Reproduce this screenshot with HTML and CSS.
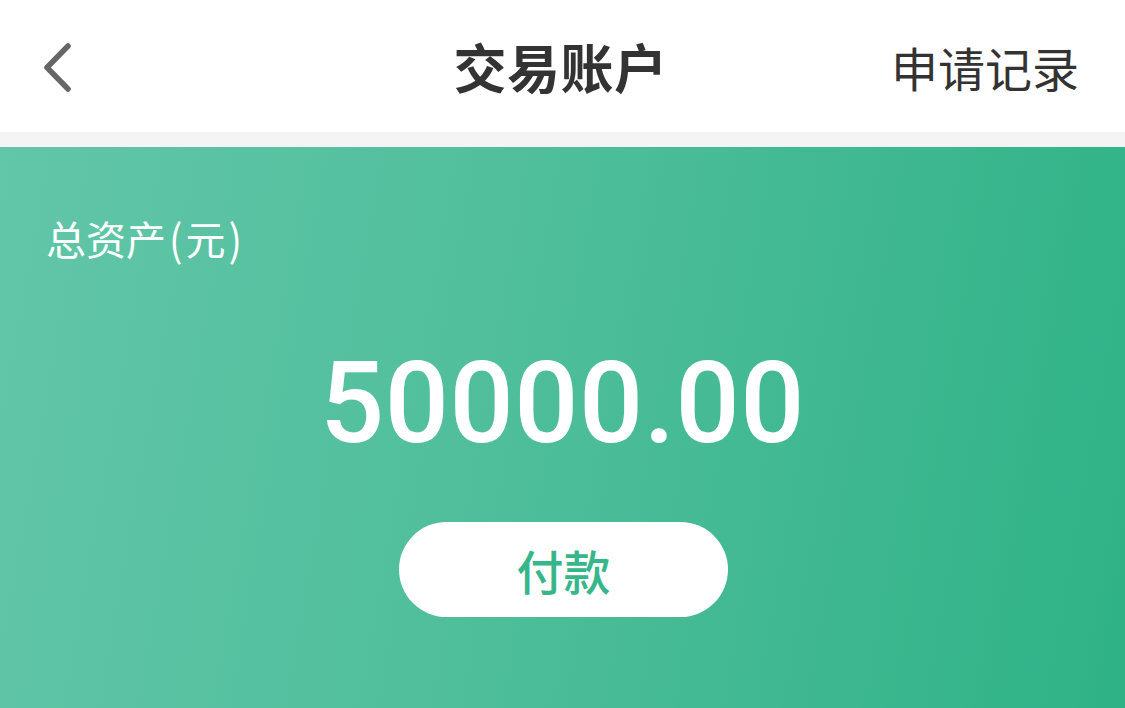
FILE: index.html
```html
<!DOCTYPE html>
<html lang="zh-CN">
<head>
<meta charset="utf-8">
<title>交易账户</title>
<link rel="stylesheet" href="styles.css">
</head>
<body>
<header class="topbar">
  <div class="back">
    <svg class="back-icon" width="34" height="52" viewBox="0 0 34 52">
      <path d="M28 4 L7 25.5 L28 47" fill="none" stroke="#666666" stroke-width="5.5" stroke-linecap="round" stroke-linejoin="round"/>
    </svg>
  </div>
  <h1 class="title">交易账户</h1>
  <div class="records">申请记录</div>
</header>
<div class="divider"></div>
<section class="assets">
  <div class="label">总资产<span class="paren">(</span>元<span class="paren">)</span></div>
  <div class="amount">50000.00</div>
  <button class="pay">付款</button>
</section>
</body>
</html>
```

FILE: styles.css
```css
html, body {
  margin: 0;
  padding: 0;
  height: 100%;
  overflow: hidden;
}
body {
  font-family: "Noto Sans CJK SC", "Noto Sans", sans-serif;
  background: #ffffff;
}
.topbar {
  height: 132px;
  display: grid;
  grid-template-columns: 1fr auto 1fr;
  align-items: center;
  background: #ffffff;
}
.back {
  padding-left: 40px;
  display: flex;
  align-items: center;
}
.back-icon {
  display: block;
  margin-top: 4px;
}
.title {
  margin: 0;
  font-size: 53px;
  font-weight: 700;
  color: #333333;
  line-height: 1;
  letter-spacing: 0.5px;
  padding-right: 4px;
}
.records {
  justify-self: end;
  padding-right: 46px;
  font-size: 47px;
  color: #333333;
  line-height: 1;
}
.divider {
  height: 15px;
  background: #f4f4f4;
}
.assets {
  height: 561px;
  background: linear-gradient(100deg, #62c6a8 0%, #4fbe9b 45%, #2fb286 100%);
  display: flex;
  flex-direction: column;
  align-items: center;
  padding-top: 67px;
  box-sizing: border-box;
}
.label {
  align-self: flex-start;
  padding-left: 46px;
  font-size: 40px;
  line-height: 48px;
  color: #ffffff;
}
.paren {
  display: inline-block;
  padding: 0 3px;
  transform: scaleY(1.08);
}
.amount {
  margin-top: 85px;
  font-family: Roboto, "Liberation Sans", sans-serif;
  font-weight: 500;
  font-size: 113px;
  line-height: 113px;
  color: #ffffff;
  letter-spacing: 0.5px;
}
.pay {
  margin-top: 62px;
  width: 329px;
  height: 95px;
  border: none;
  border-radius: 48px;
  background: #ffffff;
  color: #37b68a;
  font-family: "Noto Sans CJK SC", sans-serif;
  font-weight: 500;
  font-size: 47px;
  line-height: 1;
  padding: 0;
  margin-left: 2px;
}
```
